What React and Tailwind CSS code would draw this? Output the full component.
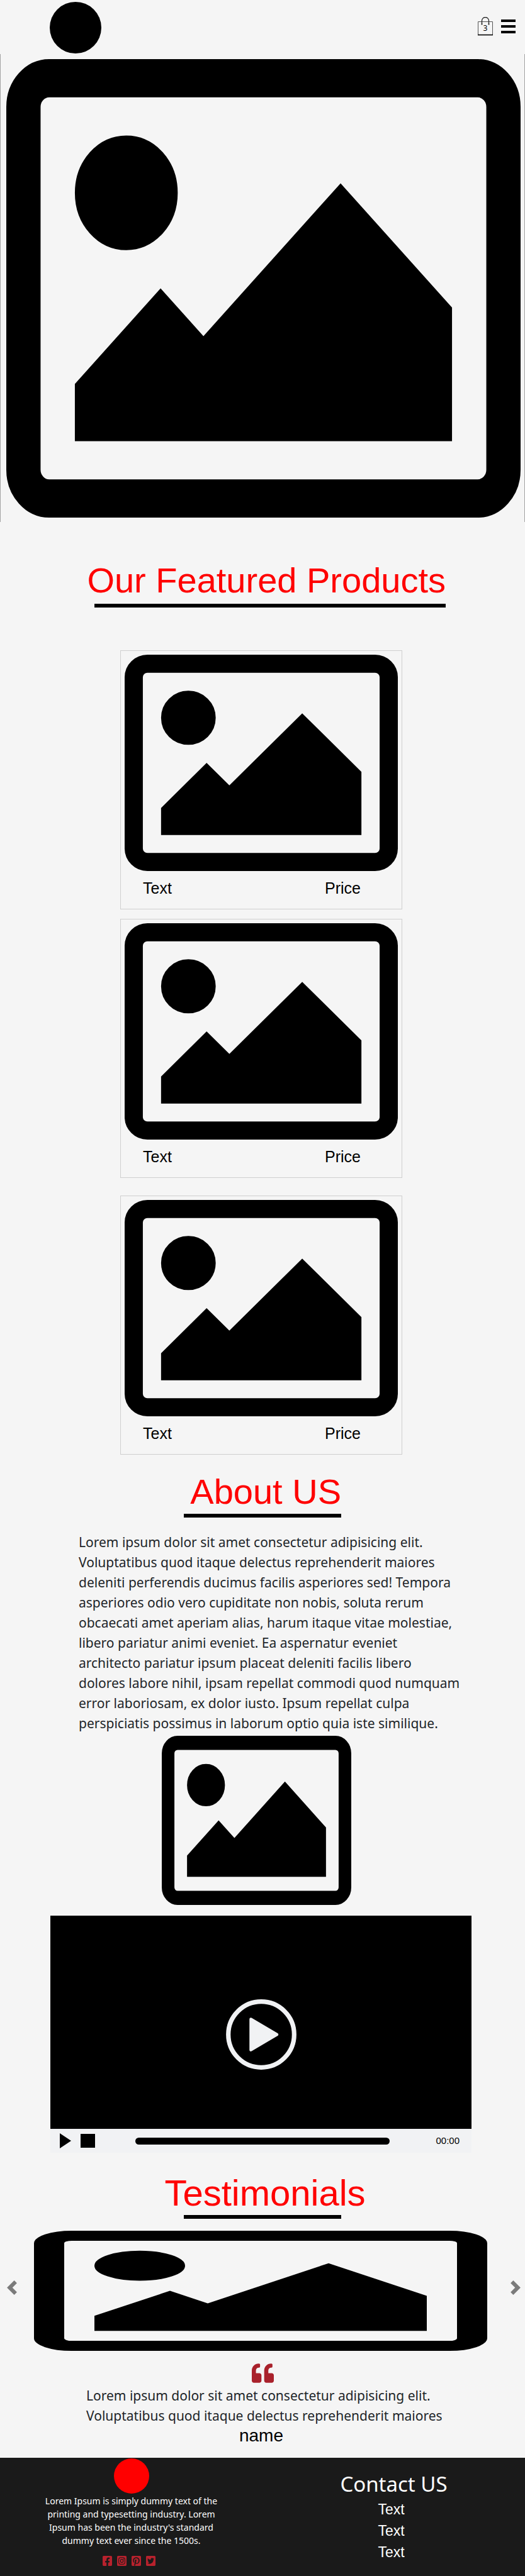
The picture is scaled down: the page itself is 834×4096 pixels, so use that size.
import React from "react";
import {
  FaQuoteLeft,
  FaFacebookSquare,
  FaInstagramSquare,
  FaPinterestSquare,
  FaTwitterSquare,
} from "react-icons/fa";

const arial = "font-['Liberation_Sans',Arial,sans-serif]";

function Picture({ className, label }) {
  return (
    <svg
      className={`block ${className}`}
      viewBox="-64 128 1920 1536"
      preserveAspectRatio="none"
      role="img"
      aria-label={label}
    >
      <path
        fill="#000"
        d="M576 576q0 80-56 136t-136 56-136-56-56-136 56-136 136-56 136 56 56 136zm1024 384v448h-1408v-192l320-320 160 160 512-512zm96-704h-1600q-13 0-22.5 9.5t-9.5 22.5v1216q0 13 9.5 22.5t22.5 9.5h1600q13 0 22.5-9.5t9.5-22.5v-1216q0-13-9.5-22.5t-22.5-9.5zm160 32v1216q0 66-47 113t-113 47h-1600q-66 0-113-47t-47-113v-1216q0-66 47-113t113-47h1600q66 0 113 47t47 113z"
      />
    </svg>
  );
}

function Heading({ children, width, align = "items-end", size = "text-[56px]" }) {
  return (
    <div className={`mx-auto flex flex-col ${align} ${width}`}>
      <h2 className={`${arial} ${size} leading-[64px] whitespace-nowrap text-[#ff0000]`}>
        {children}
      </h2>
    </div>
  );
}

function Rule({ className }) {
  return <div className={`h-1.5 bg-black ${className}`} />;
}

function ProductCard({ className = "" }) {
  return (
    <article className={`w-full max-w-[448px] border border-[#cfcfcf] px-1.5 pt-1.5 pb-[17px] ${className}`}>
      <Picture className="h-[344px] w-full" label="Product" />
      <div className={`${arial} mt-[11px] flex justify-between pr-[59px] pl-[29px] text-[25px] leading-8 text-black`}>
        <span>Text</span>
        <span>Price</span>
      </div>
    </article>
  );
}

function Header() {
  return (
    <header className="flex items-center justify-between pt-[3px] pr-[15px] pb-px pl-[79px]">
      <a href="#home" aria-label="Home" className="block size-[82px] rounded-full bg-black" />
      <div className="flex items-center gap-[13px] pb-1">
        <button type="button" aria-label="Cart, 3 items" className="relative block h-[30px] w-6">
          <svg className="block h-[30px] w-6" viewBox="0 0 24 30" fill="none">
            <path d="M.5 28V7.5h23V28" stroke="#555" />
            <path d="M0 28.5h24" stroke="#000" strokeWidth="1.6" />
            <path d="M6.5 11V6a5.5 5.5 0 0 1 11 0v5" stroke="#222" strokeWidth="1.3" />
            <circle cx="6.5" cy="11.4" r="1.1" fill="#222" />
            <circle cx="17.5" cy="11.4" r="1.1" fill="#222" />
          </svg>
          <span className="absolute inset-x-0 top-[11px] text-center text-[12px] leading-[14px] text-black">3</span>
        </button>
        <button type="button" aria-label="Menu" className="flex w-[23px] flex-col gap-[5px]">
          <span className="h-1 bg-black" />
          <span className="h-1 bg-black" />
          <span className="h-1 bg-black" />
        </button>
      </div>
    </header>
  );
}

function VideoPlayer() {
  return (
    <section className="mx-auto mt-[17px] w-full max-w-[674px] pr-[5px]" aria-label="Video">
      <div className="flex h-[339px] items-center justify-center bg-black pt-[39px]">
        <button type="button" aria-label="Play video">
          <svg className="block size-28" viewBox="0 0 112 112">
            <circle cx="56" cy="56" r="52.3" fill="none" stroke="#f1f2f4" strokeWidth="7.2" />
            <path
              d="M39.5 31.5L81 56 39.5 80.5z"
              fill="#f1f2f4"
              stroke="#f1f2f4"
              strokeWidth="4.5"
              strokeLinejoin="round"
            />
          </svg>
        </button>
      </div>
      <div className="flex h-[38px] items-center bg-[#f1f2f4] pr-[19px] pl-[15px]">
        <button type="button" aria-label="Play">
          <svg className="block h-6 w-[18px]" viewBox="0 0 18 24">
            <path d="M0 0l18 12L0 24z" />
          </svg>
        </button>
        <button type="button" aria-label="Stop" className="ml-[15px] h-[22px] w-[23px] bg-black" />
        <input
          type="range"
          aria-label="Seek"
          defaultValue="0"
          className="ml-16 h-[11px] min-w-0 flex-1 appearance-none rounded-full bg-black [&::-webkit-slider-thumb]:h-[11px] [&::-webkit-slider-thumb]:w-0 [&::-webkit-slider-thumb]:appearance-none"
        />
        <span className={`${arial} ml-[73px] text-[15px] leading-5 text-black`}>00:00</span>
      </div>
    </section>
  );
}

function Arrow({ label, d, viewBox }) {
  return (
    <button type="button" aria-label={label} className="shrink-0 pb-2.5">
      <svg className="block h-[23px] w-4" viewBox={viewBox} fill="#7b7b7b">
        <path d={d} />
      </svg>
    </button>
  );
}

const socials = [
  ["Facebook", FaFacebookSquare],
  ["Instagram", FaInstagramSquare],
  ["Pinterest", FaPinterestSquare],
  ["Twitter", FaTwitterSquare],
];

export default function App() {
  return (
    <div className="min-h-screen overflow-x-hidden bg-[#f5f5f5] font-['Noto_Sans','Open_Sans',sans-serif] text-[#212529]">
      <Header />
      <main>
        <section className="border-x border-[#a3a3a3] pt-2 pr-1.5 pb-[7px] pl-[9px]">
          <Picture className="h-[729px] w-full" label="Banner" />
        </section>

        <section className="mt-[61px]">
          <div className="pl-3">
            <Heading width="max-w-[570px]">Our Featured Products</Heading>
            <div className="mx-auto mt-[5px] flex max-w-[570px] justify-end">
              <Rule className="w-[558px]" />
            </div>
          </div>
          <div className="mt-[68px] flex flex-col items-center pr-1">
            <ProductCard />
            <ProductCard className="mt-[15px]" />
            <ProductCard className="mt-7" />
          </div>
        </section>

        <section className="mt-[27px]">
          <Heading width="max-w-[250px]">About US</Heading>
          <Rule className="mx-auto mt-[3px] max-w-[250px]" />
          <p className="mt-[23px] pl-[125px] text-[21px] leading-8 whitespace-nowrap">
            Lorem ipsum dolor sit amet consectetur adipisicing elit.
            <br />
            Voluptatibus quod itaque delectus reprehenderit maiores
            <br />
            deleniti perferendis ducimus facilis asperiores sed! Tempora
            <br />
            asperiores odio vero cupiditate non nobis, soluta rerum
            <br />
            obcaecati amet aperiam alias, harum itaque vitae molestiae,
            <br />
            libero pariatur animi eveniet. Ea aspernatur eveniet
            <br />
            architecto pariatur ipsum placeat deleniti facilis libero
            <br />
            dolores labore nihil, ipsam repellat commodi quod numquam
            <br />
            error laboriosam, ex dolor iusto. Ipsum repellat culpa
            <br />
            perspiciatis possimus in laborum optio quia iste similique.
          </p>
          <div className="mt-1 flex justify-center pr-5">
            <Picture className="h-[269px] w-[301px]" label="About us" />
          </div>
        </section>

        <VideoPlayer />

        <section className="mt-8 pb-[19px]">
          <div className="pl-2">
            <Heading width="max-w-[334px]" align="items-center" size="text-[58px]">
              Testimonials
            </Heading>
          </div>
          <Rule className="mx-auto mt-[3px] max-w-[250px]" />
          <div className="mt-[19px] flex items-center pr-[7px] pl-[11px]">
            <Arrow
              label="Previous"
              viewBox="1.25 0 5.5 8"
              d="M5.25 0l-4 4 4 4 1.5-1.5L4.25 4l2.5-2.5L5.25 0z"
            />
            <div className="min-w-0 flex-1 pr-[37px] pl-[27px]">
              <Picture className="h-[191px] w-full" label="Customer" />
            </div>
            <Arrow
              label="Next"
              viewBox="1.25 0 5.5 8"
              d="M2.75 0l-1.5 1.5L3.75 4l-2.5 2.5L2.75 8l4-4-4-4z"
            />
          </div>
          <FaQuoteLeft className="mx-auto mt-5 block h-[31px] w-[35px] text-[#a9212b]" viewBox="0 32 512 448" />
          <blockquote className="mt-1 pl-[137px] text-[21px] leading-8 whitespace-nowrap">
            Lorem ipsum dolor sit amet consectetur adipisicing elit.
            <br />
            Voluptatibus quod itaque delectus reprehenderit maiores
          </blockquote>
          <p className={`${arial} pr-1 text-center text-[28px] leading-8 text-black`}>name</p>
        </section>
      </main>

      <footer className="grid grid-cols-2 bg-[#1a1a1a] pt-px pb-4 text-center text-white">
        <div>
          <div className="mx-auto size-14 rounded-full bg-[#ff0000]" />
          <p className="mt-px text-[14px] leading-[21px] whitespace-nowrap">
            Lorem Ipsum is simply dummy text of the
            <br />
            printing and typesetting industry. Lorem
            <br />
            Ipsum has been the industry's standard
            <br />
            dummy text ever since the 1500s.
          </p>
          <div className="mt-[14px] flex justify-center gap-2 pr-2">
            {socials.map(([name, Icon]) => (
              <a key={name} href={`#${name.toLowerCase()}`} aria-label={name} className="text-[#b8222d]">
                <Icon className="block h-4 w-[15px]" viewBox="0 32 448 448" preserveAspectRatio="none" />
              </a>
            ))}
          </div>
        </div>
        <div className="pt-[21px]">
          <h3 className="text-[33px] leading-10">Contact US</h3>
          <ul className={`${arial} mt-[3px] pr-2 text-[23px] leading-[34px]`}>
            <li>Text</li>
            <li>Text</li>
            <li>Text</li>
          </ul>
        </div>
      </footer>
    </div>
  );
}
